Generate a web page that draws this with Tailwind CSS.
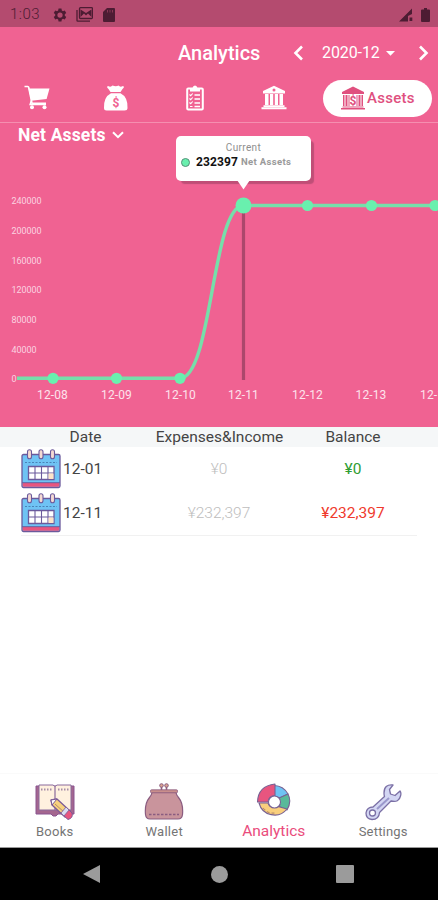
<!DOCTYPE html>
<html lang="en">
<head>
    <meta charset="UTF-8">
    <meta name="viewport" content="width=device-width, initial-scale=1.0">
    <title>Analytics</title>
    <script src="https://cdn.jsdelivr.net/npm/@tailwindcss/browser@4"></script>
</head>
<body class="w-[438px] h-[900px] overflow-hidden bg-white font-['Roboto',sans-serif] flex flex-col">

    <!-- Status bar -->
    <div class="h-[27px] shrink-0 bg-[#b44b6f] flex items-center pl-[10px] pr-[8px] text-[#4d1c33]">
        <span class="w-[43px] text-[15px] leading-none font-light tracking-[0.5px] pt-[2px]">1:03</span>
        <svg class="w-[14px] h-[14px] mt-[2px]" viewBox="0 0 24 24" fill="currentColor"><path fill-rule="evenodd" d="M9.5 1h5l.6 3.2 2 1.2 3.1-1.1 2.5 4.3-2.5 2.1v2.6l2.5 2.1-2.5 4.3-3.1-1.1-2 1.2-.6 3.2h-5l-.6-3.2-2-1.2-3.1 1.1-2.5-4.3 2.5-2.1v-2.6L1.300 8.600l2.500-4.300 3.100 1.100 2-1.200zM12 7.500a4.500 4.500 0 1 0 0 9 4.500 4.500 0 0 0 0-9z"/></svg>
        <svg class="w-[17px] h-[15px] ml-[9px] mt-[2px]" viewBox="0 0 17 15"><path d="M1 3v10.500q0 .7.700.7H14" fill="none" stroke="currentColor" stroke-width="1.300"/><rect x="3.500" y=".7" width="13" height="10.800" rx="1" fill="none" stroke="currentColor" stroke-width="1.300"/><path d="M4.500 10V2.500L10 6l5.500-3.500V10L12 6.500 10 8.500 8 6.500z" fill="currentColor"/></svg>
        <svg class="w-[12px] h-[14px] ml-[10px] mt-[2px]" viewBox="0 0 12 14"><path d="M4 0h7q1 0 1 1v12q0 1-1 1H1q-1 0-1-1V4z" fill="currentColor"/><path d="M4.500 2v2.500M7 2v2.500M9.500 2v2.500" stroke="#8a3655" stroke-width="1"/></svg>
        <svg class="w-[14px] h-[14px] ml-auto mt-[2px]" viewBox="0 0 14 14" fill="currentColor"><path d="M0 13.500 13 .5V6L9 8v5.500zM10.500 9.500h2.800v3.500h-2.800z"/></svg>
        <svg class="w-[9px] h-[14px] ml-[8px] mt-[2px]" viewBox="0 0 9 14" fill="currentColor"><path d="M3 0h3v1.500h2q1 0 1 1V13q0 1-1 1H1q-1 0-1-1V2.500q0-1 1-1h2z"/></svg>
    </div>

    <!-- Title and month picker -->
    <div class="h-[52px] shrink-0 bg-[#f06292] text-white flex items-center pl-[178px] pr-[9px]">
        <h1 class="w-[115px] text-[20px] leading-6 font-medium">Analytics</h1>
        <svg class="w-[11px] h-[16px]" viewBox="0 0 11 16"><path d="M9 1.500 2.500 8 9 14.500" fill="none" stroke="currentColor" stroke-width="2.600"/></svg>
        <span class="ml-[18px] text-[16px] leading-6 tracking-[-0.1px]">2020-12</span>
        <svg class="w-[9px] h-[5px] ml-[6px]" viewBox="0 0 9 5"><path d="M0 0h9L4.500 4.700z" fill="currentColor"/></svg>
        <svg class="w-[11px] h-[16px] ml-auto" viewBox="0 0 11 16"><path d="M2 1.500 8.500 8 2 14.500" fill="none" stroke="currentColor" stroke-width="2.600"/></svg>
    </div>

    <!-- Category tabs -->
    <div class="h-[44px] shrink-0 bg-[#f06292] border-b border-[#f58fb0] text-white flex items-center pl-[24px] pb-[5px]">
        <svg class="w-[26px] h-[26px]" viewBox="0 0 26 26"><path d="M.5 1.500h3.200q.8 0 1 .9L8 18.300h14" fill="none" stroke="currentColor" stroke-width="1.700"/><path d="M4.500 3.500h21L22.600 14 7.300 15.800z" fill="currentColor"/><path d="M7.300 15.500 6 19.500h16" fill="none" stroke="currentColor" stroke-width="1.300"/><circle cx="8" cy="22.200" r="2" fill="currentColor"/><circle cx="20.500" cy="22.200" r="2" fill="currentColor"/></svg>
        <svg class="w-[26px] h-[26px] ml-[53px]" viewBox="0 0 26 26" fill="currentColor"><path d="M5 1q3 1.500 4.500-.5Q13 2 15.500.5q1.500 2 4.500.5 2 1-.5 3L17.500 7h-10L5.500 4Q3 2 5 1z"/><path d="M8 8.200h9.500Q25 12 24.500 23q0 2.500-3 2.500h-18Q1 25.500 1 23 .5 12 8 8.200z"/><text x="13" y="21.500" text-anchor="middle" font-size="12" font-weight="700" fill="#f06292">$</text></svg>
        <svg class="w-[26px] h-[26px] ml-[53px]" viewBox="0 0 26 26" fill="none" stroke="currentColor"><rect x="5.200" y="3.500" width="15.600" height="21" rx="1" stroke-width="2"/><path d="M8 6.500V3h2.500Q11 .5 13 .5T15.500 3H18v3.500z" fill="currentColor" stroke="none"/><path d="M12.500 10H18M12.500 14H18M12.500 18H18M12.500 21.500H18" stroke-width="1.300"/><path d="m7.500 9.500 1.200 1.200 2-2.200m-3.200 5 1.200 1.200 2-2.200m-3.200 5 1.200 1.200 2-2.200M8 21.500h2.500" stroke-width="1.100"/></svg>
        <svg class="w-[26px] h-[26px] ml-[53px]" viewBox="0 0 26 26" fill="currentColor"><path fill-rule="evenodd" d="M13 .8 24 6v2.500H2V6zm0 2.700a1.500 1.500 0 1 0 0 3 1.500 1.500 0 0 0 0-3z"/><path d="M4 9h3.500v11H4zM9 9h3.200v11H9zM13.800 9H17v11h-3.200zM18.500 9H22v11h-3.500zM2.500 20.300h21v1.700h-21zM.5 22.300h25v1.900H.5z"/></svg>
        <div class="w-[109px] h-[37px] ml-[36px] rounded-full bg-white text-[#e0507f] flex items-center pl-[18px]">
            <svg class="w-[24px] h-[24px] shrink-0" viewBox="0 0 24 24" fill="currentColor"><path d="M12 .5 23 6v2H1V6z"/><path d="M2 9h1.500v11H2zM4.500 9h2v11h-2zM7.500 9h1v11h-1zM15.500 9h1v11h-1zM17.500 9h2v11h-2zM20.500 9H22v11h-1.500zM1.500 20.400h21v1h-21zM0 22h24v1.500H0z"/><text x="12" y="18.800" text-anchor="middle" font-size="12" font-weight="700">$</text></svg>
            <span class="ml-[2px] text-[15px] leading-5 font-medium tracking-[0.25px]">Assets</span>
        </div>
    </div>

    <!-- Net assets chart -->
    <section class="relative h-[304px] shrink-0 bg-[#f06292] text-white">
        <div class="flex items-center gap-[6px] pl-[18px] h-[24px]">
            <h2 class="text-[17.5px] leading-6 font-bold tracking-[0.15px]">Net Assets</h2>
            <svg class="w-[12px] h-[8px]" viewBox="0 0 12 8"><path d="M1 1.200 6 6.200l5-5" fill="none" stroke="currentColor" stroke-width="2"/></svg>
        </div>
        <svg class="block w-[438px] h-[280px]" viewBox="0 147 438 280">
            <g fill="#fbd3e0" font-size="9" letter-spacing="-0.050">
                <text x="11.500" y="204">240000</text>
                <text x="11.500" y="234">200000</text>
                <text x="11.500" y="263.500">160000</text>
                <text x="11.500" y="293">120000</text>
                <text x="11.500" y="323">80000</text>
                <text x="11.500" y="352.500">40000</text>
                <text x="11.500" y="382">0</text>
            </g>
            <path d="M243.500 206v174" stroke="#ac476c" stroke-width="3.200"/>
            <path d="M17 378.300H180C212 378.300 212 205.500 243.500 205.500H438" fill="none" stroke="#76dfaa" stroke-width="3.400"/>
            <g fill="#69f0ae">
                <circle cx="53" cy="378.300" r="5.600"/>
                <circle cx="116.500" cy="378.300" r="5.600"/>
                <circle cx="180" cy="378.300" r="5.600"/>
                <circle cx="243.500" cy="205.500" r="8"/>
                <circle cx="307.500" cy="205.500" r="5.600"/>
                <circle cx="371.500" cy="205.500" r="5.600"/>
                <circle cx="435" cy="205.500" r="5.600"/>
            </g>
            <g fill="#fde3ec" font-size="12" text-anchor="middle" letter-spacing="0.100">
                <text x="52.500" y="399">12-08</text>
                <text x="116.500" y="399">12-09</text>
                <text x="180.500" y="399">12-10</text>
                <text x="243.500" y="399">12-11</text>
                <text x="307.500" y="399">12-12</text>
                <text x="371" y="399">12-13</text>
                <text x="435.500" y="399">12-14</text>
            </g>
        </svg>
        <!-- Tooltip over the selected point -->
        <div class="absolute left-[176px] top-[13px] w-[135px] h-[45px] rounded-[5px] bg-white shadow-[4px_4px_1px_-1px_rgba(120,50,80,0.4)] text-center">
            <p class="pt-[5px] text-[10px] leading-[14px] text-[#8e8e8e] tracking-[0.35px]">Current</p>
            <p class="flex items-center pl-[5px] leading-[14px]">
                <span class="w-[9px] h-[9px] rounded-full bg-[#69f0ae] border border-[#56907a]"></span>
                <span class="ml-[6px] text-[12px] font-bold text-[#111] tracking-[0.1px]">232397</span>
                <span class="ml-[3px] text-[9.5px] font-bold text-[#9a9a9a] tracking-[0.35px]">Net Assets</span>
            </p>
            <svg class="absolute left-[61px] top-[44px] w-[13px] h-[10px]" viewBox="0 0 13 10"><path d="M0 0h13L6.500 9.500z" fill="#fff"/></svg>
        </div>
    </section>

    <!-- Records table -->
    <div class="h-[20px] shrink-0 bg-[#f5f7f8] text-[#444] text-[15.5px] leading-5 grid grid-cols-[171px_97px_170px] text-center">
        <span>Date</span>
        <span class="justify-self-center whitespace-nowrap">Expenses&amp;Income</span>
        <span>Balance</span>
    </div>
    <svg class="hidden">
        <symbol id="calendar" viewBox="0 0 40 40">
            <rect x="1" y="5.500" width="38" height="33" rx="1.500" fill="#6fc3f4" stroke="#6b5a9c" stroke-width="1.300"/>
            <path d="M1.700 34h36.600v2.500q0 1.300-1.300 1.300H3q-1.300 0-1.300-1.300z" fill="#e8557f"/>
            <path d="M1 33.700h38" stroke="#6b5a9c" stroke-width="1"/>
            <path d="M4 13.500h32" stroke="#4a83b8" stroke-width="1.200" stroke-dasharray="2 1.500"/>
            <path d="M7.500 17.500h25.500v13H7.500z" fill="#fff" stroke="#6b5a9c" stroke-width="1.300"/>
            <path d="M14 17.500v13M20.500 17.500v13M27 17.500v13M7.500 24H33" stroke="#6b5a9c" stroke-width="1.100"/>
            <path d="M27.600 24.600h4.800v5.300h-4.800z" fill="#fde3c8"/>
            <g fill="#f4d9d2" stroke="#6b5a9c" stroke-width="1.100"><rect x="6.500" y=".8" width="4" height="9" rx="2"/><rect x="18" y=".8" width="4" height="9" rx="2"/><rect x="29.500" y=".8" width="4" height="9" rx="2"/></g>
        </symbol>
    </svg>
    <div class="mx-[21px] border-b border-[#f1f1f1] text-[15.5px] leading-5">
        <div class="h-[44px] grid grid-cols-[42px_76px_160px_108px] items-center">
            <svg class="w-[40px] h-[40px]"><use href="#calendar"/></svg>
            <span class="text-[#444]">12-01</span>
            <span class="text-center text-[#bdbdbd] font-light">¥0</span>
            <span class="text-center text-[#2e9d33]">¥0</span>
        </div>
        <div class="h-[44px] grid grid-cols-[42px_76px_160px_108px] items-center">
            <svg class="w-[40px] h-[40px]"><use href="#calendar"/></svg>
            <span class="text-[#444]">12-11</span>
            <span class="text-center text-[#bdbdbd] font-light">¥232,397</span>
            <span class="text-center text-[#ef3a2d]">¥232,397</span>
        </div>
    </div>

    <!-- Bottom tabs -->
    <nav class="mt-auto h-[75px] shrink-0 border-t border-[#fafafa] border-b border-b-[#9a9a9a] grid grid-cols-4 text-[13px] leading-4 text-[#757575] text-center">
        <div class="flex flex-col items-center pt-[9px]">
            <svg class="w-[40px] h-[38px]" viewBox="0 0 40 38" stroke-linejoin="round">
                <path d="M1 3h38v28H23l-2 2h-3l-2-2H1z" fill="#a4668f" stroke="#8a5490"/>
                <path d="M4 2h14l2 1.500L22 2h14v25H4z" fill="#fff1df" stroke="#8a6a9c"/>
                <path d="M20 3.500V27" stroke="#8a6a9c" stroke-width="1.200"/>
                <path d="M6 6.500h11M23 6.500h11" stroke="#a58ca8" stroke-width="2" stroke-dasharray="1.500 1.500"/>
                <path d="m16 17 6-1 13 12-5 6-13-12z" fill="#f7d27e" stroke="#7b5a96" stroke-width="1.300"/>
                <path d="m16 17 6-1-5 6z" fill="#fff" stroke="#7b5a96"/>
                <path d="m20 21 10 9" stroke="#b28a70"/>
                <path d="m33 26 4 4q1.500 5-4 6.500L28 32z" fill="#e8557f" stroke="#7b5a96"/>
                <path d="m31 24 3 3-5 6-3-3z" fill="#d9dcf2" stroke="#7b5a96" stroke-width=".8"/>
            </svg>
            <span class="mt-[3px] tracking-[0.3px]">Books</span>
        </div>
        <div class="flex flex-col items-center pt-[9px]">
            <svg class="w-[40px] h-[38px]" viewBox="0 0 40 38" stroke="#8a5c80" stroke-linejoin="round">
                <path d="M8 9.500h24q.5 3 2.500 5 5 6 4 17-.5 4.500-4.500 4.500H6q-4 0-4.500-4.500-1-11 4-17 2-2 2.500-5z" fill="#c9949c" stroke-width="1.200"/>
                <path d="M17.500 7V3.500M22.500 7V3.500" stroke-width="1.600"/>
                <circle cx="17.500" cy="2.500" r="1.800" fill="#dba58f"/><circle cx="22.500" cy="2.500" r="1.800" fill="#dba58f"/>
                <rect x="6.500" y="6.800" width="27" height="3" rx="1" fill="#c98e8b" stroke-width=".8"/>
                <path d="M5 31.500h30" stroke-dasharray="2.500 1.500" stroke-width="1.300"/>
            </svg>
            <span class="mt-[3px] tracking-[0.3px]">Wallet</span>
        </div>
        <div class="flex flex-col items-center pt-[9px] text-[#ea4c7c]">
            <svg class="w-[36px] h-[36px]" viewBox="0 0 36 36" stroke="#776193" stroke-width="1.100" stroke-linejoin="round">
                <path d="M18 2.500A16.500 16.500 0 0 1 32 11L24 15 18 13z" fill="#6fc3f4"/>
                <path d="M32 11q4 8-1 16L22 23q3-3 1-8z" fill="#59b99a"/>
                <path d="M31 26A16 16 0 0 1 3 20h9q2 6 10 3.500z" fill="#f9cf7d"/>
                <path d="M19 1v11.500q-6 0-7 6.500H1.500Q2 3 19 1z" fill="#e8557f"/>
                <circle cx="18.500" cy="19" r="6" fill="#fff"/>
                <path d="M7 25q5 6 12 5" fill="none" stroke="#b98c68" stroke-dasharray="3 2"/>
            </svg>
            <span class="mt-[4px] text-[15.5px]">Analytics</span>
        </div>
        <div class="flex flex-col items-center pt-[9px]">
            <svg class="w-[38px] h-[38px]" viewBox="0 0 38 38" stroke="#7a6fa5" stroke-width="1.300" stroke-linejoin="round">
                <path d="M29 2q-9-1-9 8 0 2 .5 3.500L9 24q-6 0-7 6 0 6 6 6.500 7 0 7.500-7L27 18q8 2 9.500-5 1-3-.5-5l-5 4.500-4.500-1.500-1-4.500z" fill="#d3d6f3"/>
                <circle cx="8.500" cy="30" r="3" fill="#fff"/>
                <path d="m13 26 12-11" stroke-width="2" stroke="#9a98cc"/>
            </svg>
            <span class="mt-[3px] tracking-[0.2px]">Settings</span>
        </div>
    </nav>

    <!-- System navigation -->
    <div class="h-[52px] shrink-0 bg-black text-[#9b9b9b] flex items-center pl-[83px]">
        <svg class="w-[17px] h-[18px]" viewBox="0 0 17 18"><path d="M17 0v18L0 9z" fill="currentColor"/></svg>
        <span class="w-[17px] h-[17px] ml-[111px] rounded-full bg-[#9b9b9b]"></span>
        <span class="w-[18px] h-[18px] ml-[108px] rounded-[1px] bg-[#9b9b9b]"></span>
    </div>

</body>
</html>
